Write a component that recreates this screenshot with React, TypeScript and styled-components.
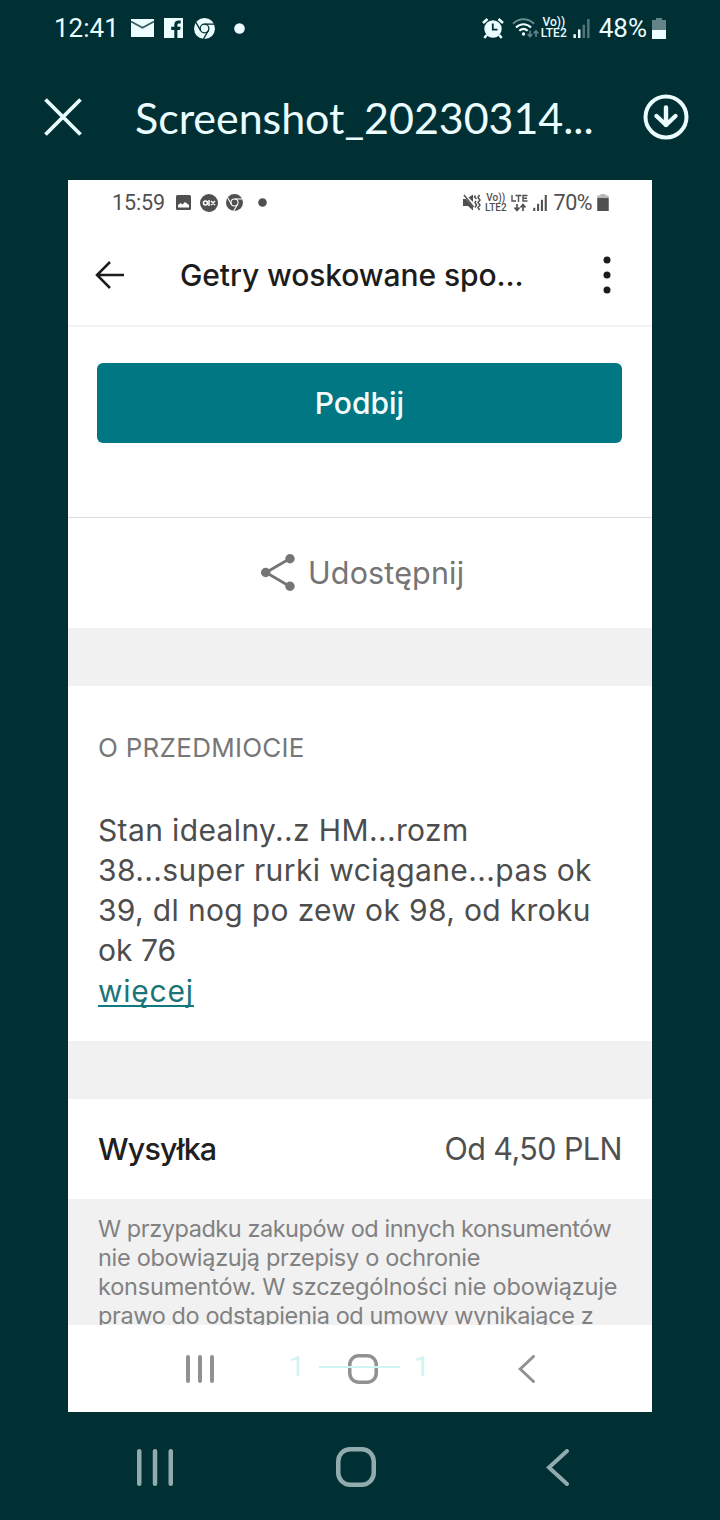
import React from "react";
import styled, { createGlobalStyle } from "styled-components";

const dark = "#002f34";
const light = "#ebfdff";
const grey = "#505050";

const Global = createGlobalStyle`
  * { box-sizing: border-box; }
  body { margin: 0; background: ${dark}; font-family: Roboto, "Liberation Sans", sans-serif; }
  svg { display: block; flex: none; }
`;

const Screen = styled.main`
  display: flex;
  flex-direction: column;
  width: 720px;
  height: 1520px;
  overflow: hidden;
  background: ${dark};
`;

const Label = styled.span<{ $size: number; $gap?: number; $weight?: number; $color?: string }>`
  display: block;
  white-space: pre;
  font-size: ${(p) => p.$size}px;
  letter-spacing: ${(p) => p.$gap ?? 0}px;
  font-weight: ${(p) => p.$weight ?? 400};
  color: ${(p) => p.$color ?? "inherit"};
`;

const Copy = styled(Label)`
  font-family: Inter, Roboto, sans-serif;
`;

const StatusBar = styled.div`
  display: flex;
  justify-content: space-between;
  align-items: center;
  height: 56px;
  padding: 0 54px 0 54px;
  color: ${light};
`;

const StatusGroup = styled.div`
  display: flex;
  align-items: center;
`;

const PhotoStatus = styled(StatusBar)`
  height: 46px;
  padding: 0 43px 1px 44px;
  color: ${grey};
`;

const Header = styled.header`
  display: flex;
  align-items: center;
  height: 124px;
  padding: 0 31px 2px 44px;
  color: ${light};
`;

const HeaderTitle = styled.h1`
  flex: 1;
  margin: 1px 0 0 53px;
  white-space: nowrap;
  font: 400 43px/52px Lato, sans-serif;
  letter-spacing: -0.05px;
`;

const Photo = styled.section`
  position: relative;
  display: flex;
  flex-direction: column;
  width: 584px;
  height: 1232px;
  margin: 0 auto;
  overflow: hidden;
  background: #fff;
`;

const AppBar = styled.div`
  display: flex;
  align-items: center;
  height: 101px;
  padding: 0 41px 1px 27px;
  border-bottom: 2px solid #f2f2f2;
  color: #1c1c1c;
`;

const AppTitle = styled.div`
  flex: 1;
  padding-left: 55px;
`;

const Action = styled.div`
  height: 191px;
  padding: 36px 30px 0 29px;
  border-bottom: 1px solid #dcdcdc;
`;

const Button = styled.button`
  display: flex;
  justify-content: center;
  align-items: center;
  width: 525px;
  height: 80px;
  padding: 0;
  border: 0;
  border-radius: 6px;
  background: #007782;
  font-family: inherit;
  color: #f4fbfb;
`;

const Share = styled.div`
  display: flex;
  align-items: center;
  gap: 13px;
  height: 110px;
  padding: 0 0 2px 193px;
  color: #757575;
`;

const Divider = styled.div`
  height: 58px;
  background: #f1f1f1;
`;

const About = styled.div`
  height: 355px;
  padding: 42px 30px 0;
  line-height: 40px;
  color: #4d4d4d;
`;

const Description = styled.div`
  padding-top: 42px;
`;

const More = styled.a`
  display: inline-block;
  height: 37px;
  border-bottom: 2px solid #0f7b7e;
  line-height: 42px;
  color: #1b7478;
`;

const Shipping = styled.div`
  display: flex;
  justify-content: space-between;
  align-items: center;
  height: 100px;
  padding: 0 30px 2px;
`;

const Legal = styled.div`
  height: 126px;
  padding: 15px 30px 0;
  overflow: hidden;
  line-height: 29px;
  background: #f1f1f1;
  color: #818181;
`;

const PhotoNav = styled.div`
  flex: 1;
  display: flex;
  align-items: center;
  padding: 1px 0 0 118px;
  color: #919191;
`;

const Counter = styled.div`
  position: absolute;
  left: 221px;
  bottom: 29px;
  display: flex;
  align-items: center;
  gap: 14px;
  color: #cdf5f2;
`;

const CounterLine = styled.div`
  width: 81px;
  height: 2px;
  background: #cdf5f2;
`;

const SystemNav = styled.nav`
  flex: 1;
  display: flex;
  align-items: center;
  padding: 2px 0 0 137px;
  color: #92abad;
`;

const Space = styled.i<{ $w: number }>`
  flex: none;
  width: ${(p) => p.$w}px;
`;

const NetworkStack = styled.div<{ $size: number; $line: number }>`
  display: flex;
  flex-direction: column;
  align-items: center;
  font-size: ${(p) => p.$size}px;
  line-height: ${(p) => p.$line}px;
  font-weight: 500;
  white-space: pre;
`;

const Chrome = ({ size, ink, cut }: { size: number; ink: string; cut: string }) => (
  <svg width={size} height={size} viewBox="0 0 24 24" fill="none">
    <circle cx="12" cy="12" r="12" fill={ink} />
    <g stroke={cut} strokeWidth="1.5">
      <circle cx="12" cy="12" r="5" />
      <path d="M12 7h11" />
      <path d="M12 7h11" transform="rotate(120 12 12)" />
      <path d="M12 7h11" transform="rotate(240 12 12)" />
    </g>
  </svg>
);

const Signal = ({ w, h, dim }: { w: number; h: number; dim: number }) => (
  <svg width={w} height={h} viewBox="0 0 17 20" fill="currentColor">
    <rect x="0" y="16" width="2.6" height="4" />
    <rect x="4.8" y="11" width="2.6" height="9" />
    <rect x="9.6" y="6" width="2.6" height="14" opacity={dim} />
    <rect x="14.4" y="0" width="2.6" height="20" opacity={dim} />
  </svg>
);

const Battery = ({ w, h, level }: { w: number; h: number; level: number }) => (
  <svg width={w} height={h} viewBox="0 0 14 21" fill="currentColor">
    <path d="M4 0h6v2h4v19H0V2h4z" opacity=".42" />
    <rect x="0" y={21 - level} width="14" height={level} />
  </svg>
);

const Recents = ({ w, h, s }: { w: number; h: number; s: number }) => (
  <svg width={w} height={h} fill="none" stroke="currentColor" strokeWidth={s} strokeLinecap="round">
    <path d={`M${s / 2} ${s / 2}V${h - s / 2}M${w / 2} ${s / 2}V${h - s / 2}M${w - s / 2} ${s / 2}V${h - s / 2}`} />
  </svg>
);

const Home = ({ size, s, r }: { size: number; s: number; r: number }) => (
  <svg width={size} height={size} fill="none" stroke="currentColor" strokeWidth={s}>
    <rect x={s / 2} y={s / 2} width={size - s} height={size - s} rx={r} />
  </svg>
);

const Back = ({ w, h, s }: { w: number; h: number; s: number }) => (
  <svg width={w} height={h} fill="none" stroke="currentColor" strokeWidth={s} strokeLinecap="round">
    <path d={`M${w - s / 2} ${s / 2}L${s * 0.75} ${h / 2}L${w - s / 2} ${h - s / 2}`} />
  </svg>
);

export default function App() {
  return (
    <Screen>
      <Global />
      <StatusBar>
        <StatusGroup>
          <Label $size={26}>12:41</Label>
          <Space $w={12} />
          <svg width="23" height="18" viewBox="0 0 23 18">
            <path d="M0 0h23v18H0z" fill={light} />
            <path d="M0 2.5l11.5 6.2L23 2.5" fill="none" stroke="#365c60" strokeWidth="1.8" />
          </svg>
          <Space $w={10} />
          <svg width="19" height="20" viewBox="0 0 19 20">
            <path d="M0 0h19v20H0z" fill={light} />
            <path d="M10.3 20v-8H7.2V8.8h3.1V6.7c0-3 1.7-4.2 4.4-4.2h2v3h-1.600c-1.300 0-1.700.5-1.700 1.600v1.700h3.200l-.5 3.200h-2.700v8z" fill={dark} />
          </svg>
          <Space $w={11} />
          <Chrome size={21} ink={light} cut={dark} />
          <Space $w={19} />
          <svg width="11" height="11"><circle cx="5.5" cy="5.5" r="5.3" fill={light} /></svg>
        </StatusGroup>
        <StatusGroup>
          <svg width="22" height="21" viewBox="0 0 22 21" fill="none" stroke="currentColor">
            <circle cx="11" cy="11" r="8.700" fill="currentColor" stroke="none" />
            <path d="M1 5l4.500-4M21 5l-4.500-4" strokeWidth="2.600" />
            <path d="M4.700 17l-2.400 3M17.300 17l2.400 3" strokeWidth="2.400" />
            <path d="M10.800 5.500v6.200h4.700" stroke={dark} strokeWidth="1.800" />
          </svg>
          <Space $w={8} />
          <svg width="27" height="21" viewBox="0 0 27 21" fill="none" stroke="currentColor" strokeWidth="2">
            <path d="M1 5.800C7-.2 16-.2 22 5.800" opacity=".45" />
            <path d="M4 9.500c4.300-4.400 10.700-4.400 15 0M7.300 12.800c2.600-2.400 5.800-2.400 8.400 0" />
            <circle cx="11.500" cy="16" r="1.700" fill="currentColor" stroke="none" />
            <path d="M18 12.500v6M15.700 16l2.300 2.700 2.300-2.700M24 19v-6M21.700 15.500l2.300-2.700 2.300 2.700" opacity=".4" strokeWidth="1.600" />
          </svg>
          <Space $w={2} />
          <NetworkStack $size={12} $line={11.500}><span>Vo))</span><span>LTE2</span></NetworkStack>
          <Space $w={6} />
          <Signal w={17} h={19} dim={0.35} />
          <Space $w={9} />
          <Label $size={26}>48%</Label>
          <Space $w={5} />
          <Battery w={14} h={21} level={9} />
        </StatusGroup>
      </StatusBar>

      <Header>
        <svg width="38" height="38" viewBox="0 0 38 38" stroke="currentColor" strokeWidth="3.800">
          <path d="M1.500 1.500l35 35M36.500 1.500l-35 35" />
        </svg>
        <HeaderTitle>Screenshot_20230314...</HeaderTitle>
        <svg width="46" height="46" viewBox="0 0 46 46" fill="none" stroke="currentColor" strokeWidth="4">
          <circle cx="23" cy="23" r="20.500" />
          <path d="M23 13.500V31M13.500 22L23 31l9.500-9" strokeWidth="4.400" strokeLinecap="round" strokeLinejoin="round" />
        </svg>
      </Header>

      <Photo>
        <PhotoStatus>
          <StatusGroup>
            <Label $size={21.500} $gap={-0.1}>15:59</Label>
            <Space $w={11} />
            <svg width="15" height="15" viewBox="0 0 15 15">
              <rect width="15" height="15" rx="1.500" fill={grey} />
              <path d="M2 12.500v-2.500l2.500-2 2 1.500 2.500-2.500 4 3v2.500z" fill="#fff" />
            </svg>
            <Space $w={9} />
            <svg width="18" height="18" viewBox="0 0 18 18" fill="none" stroke="#fff">
              <circle cx="9" cy="9" r="9" fill={grey} stroke="none" />
              <circle cx="5.500" cy="9" r="2" strokeWidth="1.600" />
              <path d="M9 6v6M11 7l4 4M15 7l-4 4" strokeWidth="1.500" />
            </svg>
            <Space $w={8} />
            <Chrome size={17} ink={grey} cut="#fff" />
            <Space $w={15} />
            <svg width="9" height="9"><circle cx="4.500" cy="4.500" r="4.300" fill={grey} /></svg>
          </StatusGroup>
          <StatusGroup>
            <svg width="18" height="17" viewBox="0 0 18 17" fill="none" stroke="currentColor">
              <path d="M0 5h3l7 8v3.500L5 12H0z" fill="currentColor" stroke="none" />
              <path d="M5.500 3.500L10 0.500v7.500z" fill="currentColor" stroke="none" />
              <path d="M1 1l9.500 12" strokeWidth="1.500" />
              <path d="M12.500 1.500l-1 1.500 2 2M16.500 1l-1.500 2.500 2 2.500-2 2.500 2 2.500-2 2.500 1.500 2.500M13 7l-1 1.500 1.500 2.500-1.500 2.500" strokeWidth="1.500" />
            </svg>
            <Space $w={4} />
            <NetworkStack $size={10} $line={9.500}><span>Vo))</span><span>LTE2</span></NetworkStack>
            <Space $w={4} />
            <svg width="17" height="18" viewBox="0 0 17 18" fill="none" stroke="currentColor" strokeWidth="1.700">
              <path d="M1 1v6h4M4.500 1.500h6M7.500 1.500V8M16.500 1.500H12V7h4.500M12 4.300h4" strokeWidth="1.400" />
              <path d="M6 10v6M3.500 13.500L6 16.500l2.500-3M12 17v-6M9.500 13.500l2.500-3 2.500 3" />
            </svg>
            <Space $w={5} />
            <Signal w={14} h={16} dim={1} />
            <Space $w={7} />
            <Label $size={21.500} $gap={-0.500}>70%</Label>
            <Space $w={5} />
            <Battery w={12} h={17} level={16} />
          </StatusGroup>
        </PhotoStatus>

        <AppBar>
          <svg width="30" height="28" viewBox="0 0 30 28" fill="none" stroke="currentColor" strokeWidth="2.500">
            <path d="M15 1L2 14l13 13M2 14h27" />
          </svg>
          <AppTitle><Copy $size={30} $gap={-0.1} $weight={500}>Getry woskowane spo...</Copy></AppTitle>
          <svg width="8" height="38" viewBox="0 0 8 38" fill="currentColor">
            <circle cx="4" cy="4" r="3.500" /><circle cx="4" cy="19" r="3.500" /><circle cx="4" cy="34" r="3.500" />
          </svg>
        </AppBar>

        <Action><Button><Copy $size={30} $weight={500}>Podbij</Copy></Button></Action>

        <Share>
          <svg width="34" height="37" viewBox="0 0 34 37" fill="currentColor">
            <path d="M29 4.500L5 18.500l24 14" fill="none" stroke="currentColor" strokeWidth="2.800" />
            <circle cx="29" cy="4.700" r="4.700" /><circle cx="4.700" cy="18.500" r="4.700" /><circle cx="29" cy="32.300" r="4.700" />
          </svg>
          <Copy $size={30.500} $gap={0.15}>Udostępnij</Copy>
        </Share>
        <Divider />

        <About>
          <Copy $size={26} $gap={0.27} $color="#777">O PRZEDMIOCIE</Copy>
          <Description>
            <Copy $size={30} $gap={0.37}>Stan idealny..z HM...rozm</Copy>
            <Copy $size={30} $gap={0.4}>38...super rurki wciągane...pas ok</Copy>
            <Copy $size={30} $gap={0.34}>39, dl nog po zew ok 98, od kroku</Copy>
            <Copy $size={30}>ok 76</Copy>
          </Description>
          <More><Copy $size={30} $gap={0.75}>więcej</Copy></More>
        </About>
        <Divider />

        <Shipping>
          <Copy $size={30.500} $gap={-0.85} $weight={500} $color="#202020">Wysyłka</Copy>
          <Copy $size={30.500} $gap={-0.55} $color="#505050">Od 4,50 PLN</Copy>
        </Shipping>

        <Legal>
          <Copy $size={23.500} $gap={-0.45}>W przypadku zakupów od innych konsumentów</Copy>
          <Copy $size={23.500} $gap={-0.3}>nie obowiązują przepisy o ochronie</Copy>
          <Copy $size={23.500} $gap={-0.2}>konsumentów. W szczególności nie obowiązuje</Copy>
          <Copy $size={23.500} $gap={-0.4}>prawo do odstąpienia od umowy wynikające z</Copy>
        </Legal>

        <PhotoNav>
          <Recents w={28} h={28} s={4} />
          <Space $w={134} />
          <Home size={30} s={3.500} r={9} />
          <Space $w={140} />
          <Back w={17} h={28} s={3} />
        </PhotoNav>
        <Counter>
          <Label $size={28}>1</Label>
          <CounterLine />
          <Label $size={28}>1</Label>
        </Counter>
      </Photo>

      <SystemNav>
        <Recents w={36} h={37} s={4.500} />
        <Space $w={163} />
        <Home size={40} s={4.500} r={12} />
        <Space $w={170} />
        <Back w={23} h={37} s={4} />
      </SystemNav>
    </Screen>
  );
}
